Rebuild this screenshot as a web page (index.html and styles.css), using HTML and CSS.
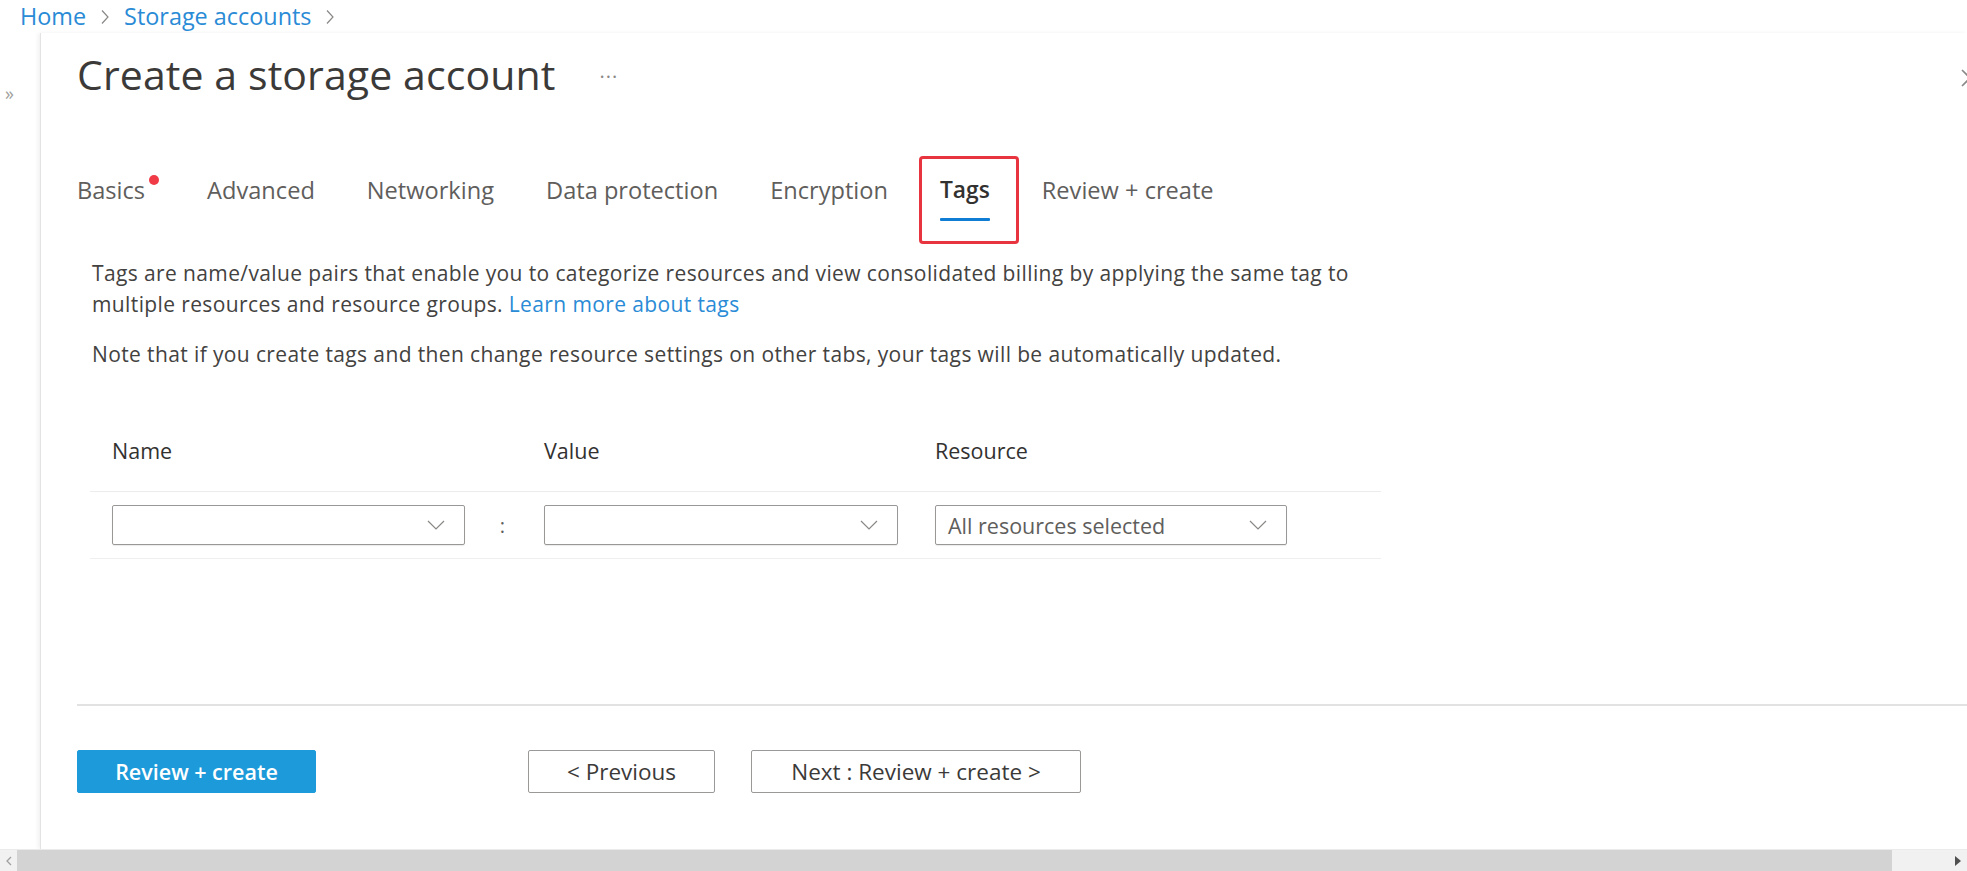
FILE: index.html
```html
<!DOCTYPE html>
<html lang="en">
<head>
<meta charset="utf-8">
<title>Create a storage account</title>
<link rel="stylesheet" href="styles.css">
</head>
<body>
<div class="page">
  <nav class="crumbs">
    <a class="crumb-link">Home</a>
    <svg class="crumb-sep" viewBox="0 0 10 16" width="10" height="16"><path d="M2 1.5 L8 8 L2 14.5" fill="none" stroke="#8a8886" stroke-width="1.2"/></svg>
    <a class="crumb-link">Storage accounts</a>
    <svg class="crumb-sep" viewBox="0 0 10 16" width="10" height="16"><path d="M2 1.5 L8 8 L2 14.5" fill="none" stroke="#8a8886" stroke-width="1.2"/></svg>
  </nav>
  <div class="main">
    <aside class="rail"><span class="rail-toggle">»</span></aside>
    <section class="panel">
      <header class="panel-head">
        <h1 class="title">Create a storage account</h1>
        <span class="more">···</span>
        <span class="spacer"></span>
        <svg class="close" viewBox="0 0 22 22" width="22" height="22"><path d="M3 3 L19 19 M19 3 L3 19" stroke="#8a8886" stroke-width="1.6" fill="none"/></svg>
      </header>
      <div class="tabs">
        <div class="tab">Basics<span class="dot"></span></div>
        <div class="tab">Advanced</div>
        <div class="tab">Networking</div>
        <div class="tab">Data protection</div>
        <div class="tab">Encryption</div>
        <div class="tab tab-active">Tags</div>
        <div class="tab">Review + create</div>
      </div>
      <div class="content">
        <p class="desc">Tags are name/value pairs that enable you to categorize resources and view consolidated billing by applying the same tag to multiple resources and resource groups. <a class="link">Learn more about tags</a></p>
        <p class="desc desc-note">Note that if you create tags and then change resource settings on other tabs, your tags will be automatically updated.</p>
        <div class="tag-table">
          <div class="tag-head">
            <span class="col-name">Name</span>
            <span class="col-colon"></span>
            <span class="col-value">Value</span>
            <span class="col-gap"></span>
            <span class="col-res">Resource</span>
          </div>
          <div class="tag-row">
            <div class="dropdown col-name"><span class="dd-text"></span><svg class="chev" viewBox="0 0 18 10" width="18" height="10"><path d="M1 1 L9 9 L17 1" fill="none" stroke="#8a8886" stroke-width="1.2"/></svg></div>
            <span class="col-colon colon">:</span>
            <div class="dropdown col-value"><span class="dd-text"></span><svg class="chev" viewBox="0 0 18 10" width="18" height="10"><path d="M1 1 L9 9 L17 1" fill="none" stroke="#8a8886" stroke-width="1.2"/></svg></div>
            <span class="col-gap"></span>
            <div class="dropdown col-res"><span class="dd-text">All resources selected</span><svg class="chev" viewBox="0 0 18 10" width="18" height="10"><path d="M1 1 L9 9 L17 1" fill="none" stroke="#8a8886" stroke-width="1.2"/></svg></div>
          </div>
        </div>
      </div>
      <footer class="footer">
        <button class="btn btn-primary">Review + create</button>
        <button class="btn btn-prev">&lt; Previous</button>
        <button class="btn btn-next">Next : Review + create &gt;</button>
      </footer>
    </section>
  </div>
  <div class="hscroll">
    <svg class="hs-arrow" viewBox="0 0 8 10" width="8" height="10"><path d="M6 1 L2 5 L6 9" fill="none" stroke="#a0a0a0" stroke-width="1.3"/></svg>
    <div class="hs-thumb"></div>
    <span class="hs-rest"></span>
    <svg class="hs-arrow" viewBox="0 0 8 10" width="8" height="10"><path d="M1 0 L7 5 L1 10 Z" fill="#505050"/></svg>
  </div>
</div>
</body>
</html>
```

FILE: styles.css
```css
* { box-sizing: border-box; }

html, body {
  margin: 0;
  padding: 0;
  background: #ffffff;
  overflow: hidden;
}

body {
  font-family: "Segoe UI", "Open Sans", sans-serif;
  color: #3b3a39;
}

.page {
  height: 871px;
  display: flex;
  flex-direction: column;
}

/* breadcrumb */
.crumbs {
  height: 33px;
  display: flex;
  align-items: center;
  padding-left: 20px;
  gap: 14px;
  font-size: 23.4px;
  line-height: 33px;
}
.crumb-link {
  color: #2a8bd6;
  text-decoration: none;
}
.crumb-sep { flex: none; }

/* main */
.main {
  flex: 1;
  display: flex;
  min-height: 0;
}

.rail {
  width: 40px;
  flex: none;
  padding-top: 49px;
  padding-left: 5px;
}
.rail-toggle {
  font-size: 18px;
  color: #a19f9d;
  line-height: 22px;
}

.panel {
  flex: 1;
  display: flex;
  flex-direction: column;
  border-left: 1px solid #e3e3e3;
  box-shadow: -2px 0 4px rgba(0, 0, 0, 0.06);
  padding-left: 36px;
  min-width: 0;
}

.panel-head {
  display: flex;
  align-items: center;
  padding-top: 11px;
  height: 60px;
  box-sizing: content-box;
}
.title {
  margin: 0;
  font-size: 41px;
  font-weight: 400;
  line-height: 50px;
  color: #3b3a39;
  letter-spacing: 0.1px;
}
.more {
  margin-left: 44px;
  font-size: 20px;
  color: #8a8886;
  letter-spacing: 1px;
  padding-top: 4px;
}
.spacer { flex: 1; }
.close {
  margin-right: -14px;
  margin-top: 8px;
}

/* tabs */
.tabs {
  display: flex;
  gap: 52px;
  margin-top: 71px;
}
.tab {
  position: relative;
  font-size: 23.6px;
  line-height: 30px;
  color: #5f5e5c;
  padding-bottom: 13px;
  border-bottom: 3px solid transparent;
}
.tab-active {
  color: #323130;
  font-weight: 600;
  font-size: 22.8px;
}
.tab-active::before {
  content: "";
  position: absolute;
  left: 0;
  right: 0;
  bottom: -3px;
  height: 3px;
  background: #0f7dd4;
  border-radius: 1px;
}
.tab-active::after {
  content: "";
  position: absolute;
  left: -21px;
  right: -29px;
  top: -19px;
  bottom: -26px;
  border: 3px solid #e8343f;
  border-radius: 4px;
}
.tab:first-child { margin-right: 10px; }
.dot {
  position: absolute;
  right: -14px;
  top: 0;
  width: 10px;
  height: 10px;
  border-radius: 50%;
  background: #f03a45;
}

/* content */
.content {
  flex: 1;
  padding-left: 15px;
  padding-top: 37px;
}
.desc {
  margin: 0;
  max-width: 1300px;
  font-size: 21px;
  letter-spacing: 0.38px;
  line-height: 31px;
  color: #434241;
}
.desc-note {
  margin-top: 19px;
}
.link {
  color: #2a8bd6;
  text-decoration: none;
}

.tag-table {
  width: 1291px;
  margin-left: -2px;
  margin-top: 61px;
}
.tag-head,
.tag-row {
  display: flex;
  align-items: center;
  padding-left: 22px;
  border-bottom: 1px solid #ececec;
}
.tag-head {
  height: 61px;
  padding-bottom: 22px;
  font-size: 21.5px;
  color: #323130;
}
.tag-row {
  height: 67px;
  border-bottom-color: #efefef;
}
.col-name { width: 353px; flex: none; }
.col-colon { width: 79px; flex: none; text-align: center; }
.col-value { width: 354px; flex: none; }
.col-gap { width: 37px; flex: none; }
.col-res { width: 352px; flex: none; }

.colon {
  font-size: 20px;
  color: #605e5c;
  padding-right: 4px;
}

.dropdown {
  height: 40px;
  border: 1px solid #999896;
  border-radius: 2px;
  box-shadow: 0 1px 1px rgba(0, 0, 0, 0.08);
  display: flex;
  align-items: center;
  padding: 0 19px 0 12px;
}
.dd-text {
  flex: 1;
  font-size: 21.5px;
  color: #605e5c;
}
.chev { flex: none; }

/* footer */
.footer {
  border-top: 2px solid #e2e2e2;
  padding-top: 44px;
  height: 145px;
  flex: none;
  display: flex;
  align-items: flex-start;
}
.btn {
  font-family: "Segoe UI", "Open Sans", sans-serif;
  font-size: 22.5px;
  height: 43px;
  border-radius: 2px;
  cursor: pointer;
  padding: 0;
}
.btn-primary {
  width: 239px;
  background: #1d9ad9;
  border: 1px solid #1d9ad9;
  color: #ffffff;
  font-weight: 600;
  font-size: 21.5px;
}
.btn-prev {
  width: 187px;
  margin-left: 212px;
  background: #ffffff;
  border: 1px solid #9a9998;
  color: #3b3a39;
}
.btn-next {
  width: 330px;
  margin-left: 36px;
  background: #ffffff;
  border: 1px solid #9a9998;
  color: #3b3a39;
}

/* horizontal scrollbar */
.hscroll {
  height: 22px;
  flex: none;
  display: flex;
  align-items: center;
  background: #f1f1f1;
  border-top: 1px solid #ebebeb;
  padding: 0 5px;
}
.hs-thumb {
  margin-left: 4px;
  width: 1875px;
  height: 21px;
  background: #d3d3d3;
}
.hs-rest { flex: 1; }
```
